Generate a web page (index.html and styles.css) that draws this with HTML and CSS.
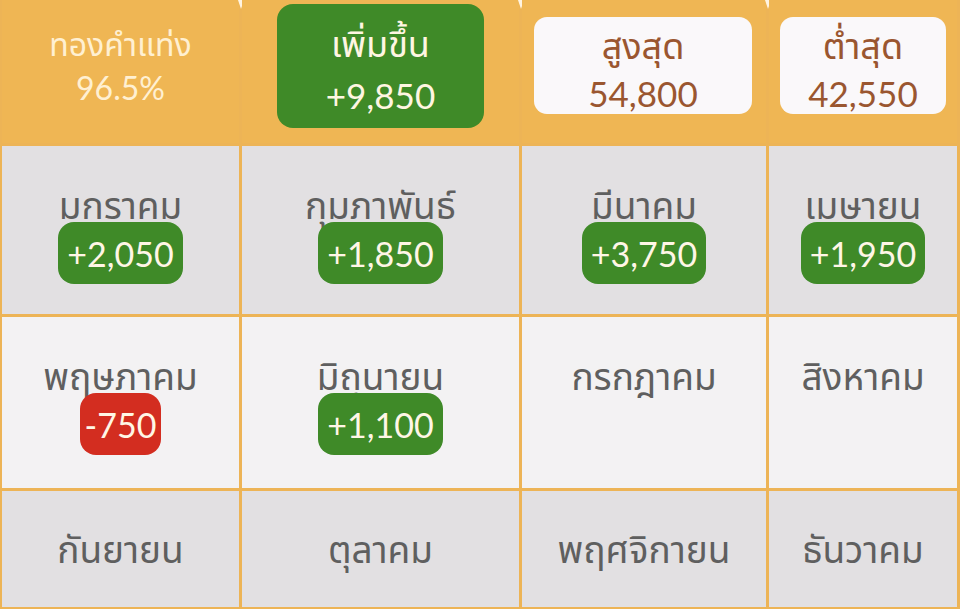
FILE: index.html
```html
<!DOCTYPE html>
<html lang="th">
<head>
<meta charset="utf-8">
<title>ทองคำแท่ง 96.5%</title>
<link rel="stylesheet" href="styles.css">
</head>
<body>
<div class="board">
  <div class="head head-title tick">
    <div class="head-line">ทองคำแท่ง</div>
    <div class="head-num">96.5%</div>
  </div>
  <div class="head tick">
    <div class="up-box">
      <div class="box-line">เพิ่มขึ้น</div>
      <div class="box-num">+9,850</div>
    </div>
  </div>
  <div class="head head-high tick">
    <div class="stat-box">
      <div class="box-line">สูงสุด</div>
      <div class="box-num">54,800</div>
    </div>
  </div>
  <div class="head head-low">
    <div class="stat-box">
      <div class="box-line">ต่ำสุด</div>
      <div class="box-num">42,550</div>
    </div>
  </div>

  <div class="cell dark"><div class="month">มกราคม</div><div class="badge up">+2,050</div></div>
  <div class="cell dark"><div class="month">กุมภาพันธ์</div><div class="badge up">+1,850</div></div>
  <div class="cell dark"><div class="month">มีนาคม</div><div class="badge up">+3,750</div></div>
  <div class="cell dark"><div class="month">เมษายน</div><div class="badge up">+1,950</div></div>

  <div class="cell light"><div class="month">พฤษภาคม</div><div class="badge down">-750</div></div>
  <div class="cell light"><div class="month">มิถุนายน</div><div class="badge up">+1,100</div></div>
  <div class="cell light"><div class="month">กรกฎาคม</div></div>
  <div class="cell light"><div class="month">สิงหาคม</div></div>

  <div class="cell dark last"><div class="month">กันยายน</div></div>
  <div class="cell dark last"><div class="month">ตุลาคม</div></div>
  <div class="cell dark last"><div class="month">พฤศจิกายน</div></div>
  <div class="cell dark last"><div class="month">ธันวาคม</div></div>
</div>
</body>
</html>
```

FILE: styles.css
```css
* { box-sizing: border-box; }

html, body {
  margin: 0;
  padding: 0;
  width: 960px;
  height: 609px;
  overflow: hidden;
  background: #EDB456;
  font-family: Lato, "Noto Sans Thai", "Noto Sans Thai UI", "Noto Sans", sans-serif;
}

.board {
  display: grid;
  grid-template-columns: 237px 277px 244px 188px;
  grid-template-rows: 143px 168px 171px 116px;
  gap: 3px;
  padding: 0 3px 2px 2px;
  background: #EDB456;
  width: 960px;
  height: 609px;
}

.head {
  position: relative;
  background: #EFB654;
}

.tick::after {
  content: "";
  position: absolute;
  top: 0;
  right: -5px;
  width: 0;
  height: 0;
  border-left: 3px solid transparent;
  border-right: 3px solid transparent;
  border-top: 9px solid #FFF4E2;
}

.head-title {
  display: flex;
  flex-direction: column;
  align-items: center;
  padding-top: 22px;
  color: #FFF0D2;
}

.head-line {
  font-size: 32px;
  line-height: 44px;
}

.head-num {
  font-size: 32px;
  line-height: 44px;
}

.up-box {
  margin: 4px 35px 0 35px;
  height: 124px;
  background: #3F8A28;
  border-radius: 16px;
  color: #FFF6E2;
  display: flex;
  flex-direction: column;
  align-items: center;
  padding-top: 16px;
}

.up-box .box-num {
  margin-top: 4px;
}

.box-line {
  font-size: 36px;
  line-height: 46px;
}

.box-num {
  font-size: 35px;
  line-height: 50px;
}

.head-high .stat-box {
  margin: 17px 14px 0 12px;
}

.head-low .stat-box {
  margin: 17px 11px 0 11px;
}

.stat-box {
  height: 97px;
  background: #FAF8FA;
  border-radius: 13px;
  color: #9A5630;
  display: flex;
  flex-direction: column;
  align-items: center;
  padding-top: 5px;
}

.cell {
  display: flex;
  flex-direction: column;
  align-items: center;
  padding-top: 38px;
  color: #5F5F5F;
}

.cell.dark { background: #E2E0E2; }
.cell.light { background: #F3F2F3; }
.cell.last { padding-top: 37px; }

.month {
  font-size: 37px;
  line-height: 42px;
  white-space: nowrap;
}

.badge {
  margin-top: -4px;
  height: 62px;
  padding: 0 9px;
  border-radius: 16px;
  color: #FFF6E6;
  font-size: 34px;
  line-height: 64px;
}

.badge.up { background: #3F8A28; }
.badge.down { background: #D32D20; padding: 0 5px; }
```
